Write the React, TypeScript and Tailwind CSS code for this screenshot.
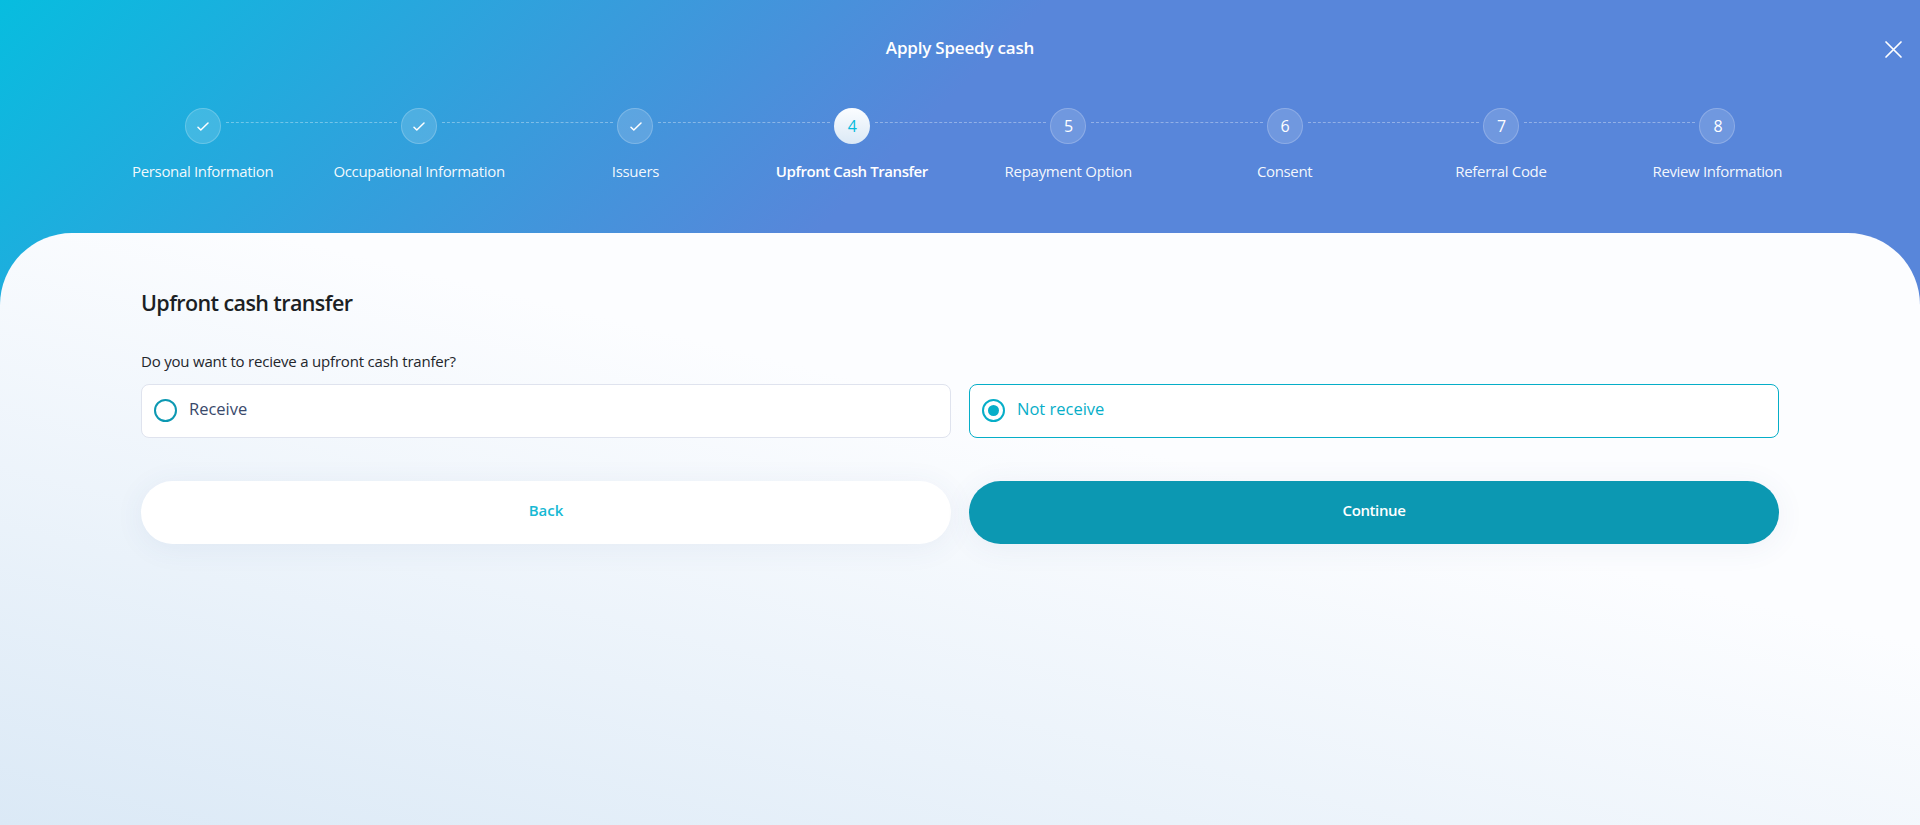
import { Fragment } from "react";
import clsx from "clsx";

type Step = { label: string; state: "done" | "active" | "todo"; tracking: string };

const steps: Step[] = [
  { label: "Personal Information", state: "done", tracking: "tracking-[-0.34px]" },
  { label: "Occupational Information", state: "done", tracking: "tracking-[-0.33px]" },
  { label: "Issuers", state: "done", tracking: "tracking-[-0.28px]" },
  { label: "Upfront Cash Transfer", state: "active", tracking: "tracking-[-0.42px]" },
  { label: "Repayment Option", state: "todo", tracking: "tracking-[-0.27px]" },
  { label: "Consent", state: "todo", tracking: "tracking-[-0.35px]" },
  { label: "Referral Code", state: "todo", tracking: "tracking-[-0.33px]" },
  { label: "Review Information", state: "todo", tracking: "tracking-[-0.36px]" },
];

function StepCircle({ step, number }: { step: Step; number: number }) {
  return (
    <span
      className={clsx(
        "flex size-9 shrink-0 items-center justify-center rounded-full pl-px text-base",
        step.state === "active"
          ? "bg-linear-to-b from-[#fbfdff] to-[#dbe9f6] text-[#06bbdc]"
          : "border border-white/20 bg-white/15 text-white",
      )}
    >
      {step.state === "done" ? (
        <svg className="h-[9px] w-3" viewBox="0 0 12 9" fill="none" stroke="currentColor" strokeWidth="1.5">
          <path d="M1 5.2 L3.8 8 L11 1" strokeLinecap="round" strokeLinejoin="round" />
        </svg>
      ) : (
        number
      )}
    </span>
  );
}

function Stepper() {
  return (
    <nav className="mx-auto w-[1731px]">
      <div className="flex items-start px-[90px]">
        {steps.map((step, i) => (
          <Fragment key={step.label}>
            {i > 0 && <span className="mr-1 ml-[5px] mt-3.5 flex-1 border-t border-dashed border-white/35" />}
            <StepCircle step={step} number={i + 1} />
          </Fragment>
        ))}
      </div>
      <ol className="mt-[15px] grid grid-cols-8">
        {steps.map((step) => (
          <li
            key={step.label}
            className={clsx(
              "text-center text-[15px] leading-6 whitespace-nowrap",
              step.state === "active" ? "font-semibold" : "font-normal text-white/95",
              step.tracking,
            )}
          >
            {step.label}
          </li>
        ))}
      </ol>
    </nav>
  );
}

function Option({ label, checked }: { label: string; checked?: boolean }) {
  return (
    <label
      className={clsx(
        "flex h-[54px] items-center rounded-lg border bg-white pb-px pl-3 text-[16.5px]",
        checked ? "border-[#06aec8] text-[#06aec8]" : "border-[#dfe3ee] text-[#39496b]",
      )}
    >
      <span
        className={clsx(
          "flex size-[23px] items-center justify-center rounded-full border-2",
          checked ? "border-[#06aec8]" : "border-[#0c98b2]",
        )}
      >
        {checked && <span className="size-[11px] rounded-full bg-[#06aec8]" />}
      </span>
      <span className="ml-3 pb-[3px]">{label}</span>
    </label>
  );
}

export default function App() {
  return (
    <div className="flex h-[825px] flex-col overflow-hidden bg-[linear-gradient(135deg,#07bddf_0px,#5886da_742px)] font-['Open_Sans','Noto_Sans',sans-serif] text-white">
      <header className="grid h-[108px] grid-cols-[1fr_auto_1fr] items-start pt-9">
        <h1 className="col-start-2 text-[17px] leading-6 font-semibold tracking-[-0.2px]">Apply Speedy cash</h1>
        <button aria-label="Close" className="mt-1 mr-[17px] size-[19px] justify-self-end">
          <svg viewBox="0 0 19 19" fill="none" stroke="currentColor" strokeWidth="1.7" strokeLinecap="round">
            <path d="M2 2 L17 17 M17 2 L2 17" />
          </svg>
        </button>
      </header>
      <Stepper />
      <main className="mt-[50px] flex-1 rounded-t-[72px] bg-[linear-gradient(14deg,#dbe9f6_0px,#fcfdff_640px)] px-[141px] pt-[54px]">
        <h2 className="text-[21.5px] leading-8 font-semibold tracking-[-0.6px] text-[#1c1f24]">Upfront cash transfer</h2>
        <p className="mt-[30px] text-[15px] leading-6 tracking-[-0.2px] text-[#23262c]">
          Do you want to recieve a upfront cash tranfer?
        </p>
        <div className="mt-[11px] grid grid-cols-2 gap-[18px]">
          <Option label="Receive" />
          <Option label="Not receive" checked />
        </div>
        <div className="mt-[43px] grid grid-cols-2 gap-[18px] text-[15px] font-semibold">
          <button className="h-[63px] rounded-full bg-white pb-1 text-[#16b9d4] shadow-[0_4px_30px_rgba(60,80,140,0.07)]">
            Back
          </button>
          <button className="h-[63px] rounded-full bg-[#0c98b2] pb-1 tracking-[-0.4px] shadow-[0_4px_30px_rgba(60,80,140,0.07)]">
            Continue
          </button>
        </div>
      </main>
    </div>
  );
}
